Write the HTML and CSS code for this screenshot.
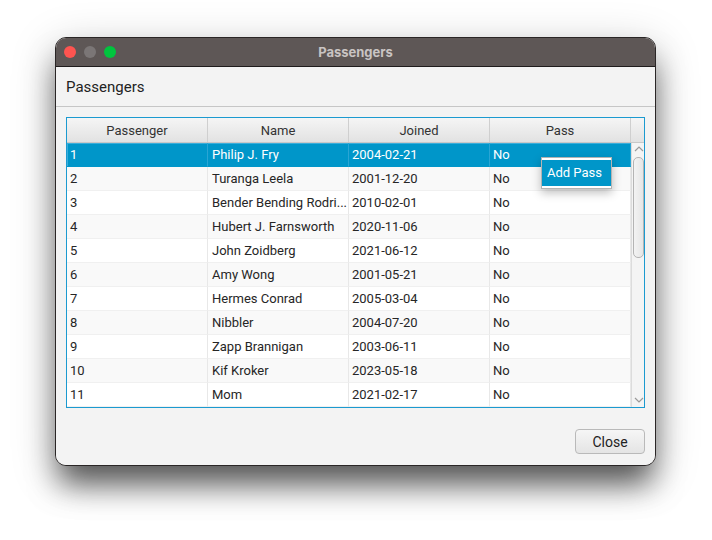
FILE: index.html
```html
<!DOCTYPE html>
<html>
<head>
<meta charset="utf-8">
<link rel="stylesheet" href="styles.css">
</head>
<body>
<div class="window">
  <div class="titlebar">
    <div class="lights">
      <span class="light red"></span>
      <span class="light gray"></span>
      <span class="light green"></span>
    </div>
    <div class="title">Passengers</div>
  </div>
  <div class="content">
    <div class="heading">Passengers</div>
    <div class="main">
      <div class="table">
        <div class="thead">
          <div class="th">Passenger</div>
          <div class="th">Name</div>
          <div class="th">Joined</div>
          <div class="th">Pass</div>
          <div class="th corner"></div>
        </div>
        <div class="tbody">
          <div class="rows">
            <div class="row selected"><div class="td">1</div><div class="td">Philip J. Fry</div><div class="td">2004-02-21</div><div class="td">No</div></div>
            <div class="row"><div class="td">2</div><div class="td">Turanga Leela</div><div class="td">2001-12-20</div><div class="td">No</div></div>
            <div class="row"><div class="td">3</div><div class="td">Bender Bending Rodri...</div><div class="td">2010-02-01</div><div class="td">No</div></div>
            <div class="row"><div class="td">4</div><div class="td">Hubert J. Farnsworth</div><div class="td">2020-11-06</div><div class="td">No</div></div>
            <div class="row"><div class="td">5</div><div class="td">John Zoidberg</div><div class="td">2021-06-12</div><div class="td">No</div></div>
            <div class="row"><div class="td">6</div><div class="td">Amy Wong</div><div class="td">2001-05-21</div><div class="td">No</div></div>
            <div class="row"><div class="td">7</div><div class="td">Hermes Conrad</div><div class="td">2005-03-04</div><div class="td">No</div></div>
            <div class="row"><div class="td">8</div><div class="td">Nibbler</div><div class="td">2004-07-20</div><div class="td">No</div></div>
            <div class="row"><div class="td">9</div><div class="td">Zapp Brannigan</div><div class="td">2003-06-11</div><div class="td">No</div></div>
            <div class="row"><div class="td">10</div><div class="td">Kif Kroker</div><div class="td">2023-05-18</div><div class="td">No</div></div>
            <div class="row"><div class="td">11</div><div class="td">Mom</div><div class="td">2021-02-17</div><div class="td">No</div></div>
          </div>
          <div class="vscroll">
            <svg class="arrow" width="10" height="6" viewBox="0 0 10 6"><path d="M1 5 L5 1 L9 5" fill="none" stroke="#9a9a9a" stroke-width="1.2"/></svg>
            <div class="track"><div class="thumb"></div></div>
            <svg class="arrow" width="10" height="6" viewBox="0 0 10 6"><path d="M1 1 L5 5 L9 1" fill="none" stroke="#9a9a9a" stroke-width="1.2"/></svg>
          </div>
        </div>
      </div>
      <div class="footer">
        <button class="btn">Close</button>
      </div>
    </div>
  </div>
  <div class="menu">
    <div class="menu-item">Add Pass</div>
  </div>
</div>
</body>
</html>
```

FILE: styles.css
```css
* { box-sizing: border-box; }
html, body { margin: 0; padding: 0; background: #ffffff; }
body {
  min-height: 540px;
  padding-top: 37px;
  font-family: Roboto, "Liberation Sans", sans-serif;
  font-size: 13px;
  color: #2b2b2b;
}
.window {
  position: relative;
  width: 601px;
  height: 429px;
  margin: 0 0 0 55px;
  border: 1px solid #2a2626;
  border-radius: 11px;
  background: #f3f3f3;
  box-shadow: 0 22px 30px -4px rgba(0,0,0,0.6), 0 10px 45px rgba(0,0,0,0.22);
  display: flex;
  flex-direction: column;
}
.titlebar {
  height: 29px;
  background: #5e5756;
  border-bottom: 1px solid #1f1c1c;
  border-radius: 10px 10px 0 0;
  position: relative;
  display: flex;
  align-items: center;
  justify-content: center;
  flex: none;
}
.lights {
  position: absolute;
  left: 8px;
  top: 8px;
  display: flex;
  gap: 8px;
}
.light {
  width: 12px;
  height: 12px;
  border-radius: 50%;
  display: block;
}
.red { background: #fe5450; }
.gray { background: #7b7676; }
.green { background: #00c53e; }
.title {
  font-family: Inter, "Liberation Sans", sans-serif;
  font-weight: bold;
  font-size: 13px;
  color: #c9c4c3;
}
.content {
  flex: 1;
  display: flex;
  flex-direction: column;
  border-radius: 0 0 10px 10px;
  background: #f3f3f3;
}
.heading {
  height: 40px;
  border-bottom: 1px solid #c6c6c6;
  padding: 11px 0 0 10px;
  font-size: 15px;
  color: #222;
  flex: none;
}
.main {
  padding: 10px 9px 0 10px;
  display: flex;
  flex-direction: column;
}
.table {
  width: 579px;
  height: 291px;
  border: 1px solid #1b9ad0;
  background: #ffffff;
  display: flex;
  flex-direction: column;
}
.thead {
  display: flex;
  height: 25px;
  flex: none;
  border-bottom: 1px solid #c8c8c8;
}
.th {
  width: 141px;
  border-right: 1px solid #cfcfcf;
  background: linear-gradient(#f5f5f5, #e2e2e2);
  display: flex;
  align-items: center;
  justify-content: center;
  color: #333;
  font-size: 13px;
}
.th.corner {
  width: 13px;
  border-right: none;
  flex: 1;
}
.tbody {
  display: flex;
  flex: 1;
  overflow: hidden;
}
.rows {
  width: 564px;
  display: flex;
  flex-direction: column;
}
.row {
  display: flex;
  height: 24px;
  flex: none;
  background: #ffffff;
}
.row:nth-child(even) { background: #f9f9f9; }
.td {
  width: 141px;
  border-right: 1px solid #e8e8e8;
  border-bottom: 1px solid #f0f0f0;
  padding: 4px 0 0 3px;
  white-space: nowrap;
  overflow: hidden;
  color: #262626;
}
.td:nth-child(2) { padding-left: 4px; }
.row.selected {
  background: #0096c9;
  box-shadow: inset 0 0 0 1px #3aaedb;
}
.row.selected .td {
  color: #ffffff;
  border-right-color: #2aa5d4;
  border-bottom-color: #0096c9;
}
.vscroll {
  flex: 1;
  border-left: 1px solid #dcdcdc;
  background: #f4f4f4;
  display: flex;
  flex-direction: column;
  align-items: center;
  padding-top: 3px;
}
.arrow { flex: none; display: block; }
.track {
  flex: 1;
  width: 100%;
  padding: 5px 1px 0 1px;
}
.thumb {
  width: 11px;
  height: 101px;
  border: 1px solid #b4b4b4;
  border-radius: 5px;
  background: linear-gradient(90deg, #f3f3f3, #e6e6e6);
}
.vscroll .arrow:last-child { margin-bottom: 4px; }
.footer {
  display: flex;
  justify-content: flex-end;
  padding: 21px 1px 0 0;
}
.btn {
  width: 70px;
  height: 25px;
  border: 1px solid #b9b9b9;
  border-radius: 4px;
  background: linear-gradient(#f6f6f6, #e4e4e4);
  font-family: Roboto, "Liberation Sans", sans-serif;
  font-size: 14px;
  color: #222;
  padding: 0;
}
.menu {
  position: absolute;
  left: 485px;
  top: 119px;
  width: 71px;
  height: 32px;
  background: #ffffff;
  border: 1px solid #b3b3b3;
  padding: 2px 0;
  box-shadow: 0 4px 10px rgba(0,0,0,0.25);
}
.menu-item {
  height: 26px;
  background: #0096c9;
  color: #ffffff;
  font-size: 13px;
  padding: 5px 0 0 5px;
  white-space: nowrap;
}
```
